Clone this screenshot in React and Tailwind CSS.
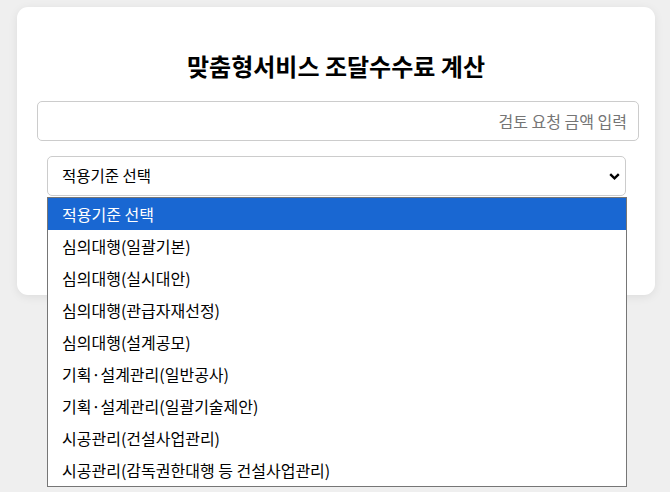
import React from "react";

const options = [
  "적용기준 선택",
  "심의대행(일괄기본)",
  "심의대행(실시대안)",
  "심의대행(관급자재선정)",
  "심의대행(설계공모)",
  "기획·설계관리(일반공사)",
  "기획·설계관리(일괄기술제안)",
  "시공관리(건설사업관리)",
  "시공관리(감독권한대행 등 건설사업관리)",
];

function Chevron() {
  return (
    <svg width="11" height="7" viewBox="0 0 11 7" className="mr-[2px]">
      <path d="M1.2 1.2 L5.5 5.3 L9.8 1.2" fill="none" stroke="#000" strokeWidth="2.4" />
    </svg>
  );
}

export default function App() {
  const selected = 0;

  return (
    <div
      className="min-h-[492px] bg-[#efefef] pt-[7px] pl-[17px]"
      style={{ fontFamily: '"Noto Sans CJK KR", "Noto Sans", sans-serif' }}
    >
      <div className="w-[638px] h-[288px] rounded-[11px] bg-white shadow-[0_2px_10px_rgba(0,0,0,0.08)] pt-[43px]">
        <h1 className="text-center text-[24px] leading-[32px] font-bold text-black">
          맞춤형서비스 조달수수료 계산
        </h1>

        <div className="mt-[19px] ml-[20px] w-[602px] h-[40px] rounded-[5px] border border-[#cccccc] flex items-center justify-end pr-[11px]">
          <span className="text-[16px] text-[#757575]">검토 요청 금액 입력</span>
        </div>

        <div className="relative mt-[15px] ml-[30px] w-[579px]">
          <div className="h-[40px] rounded-[5px] border border-[#cccccc] flex items-center justify-between pl-[14px] pr-[3px] bg-white">
            <span className="text-[15.5px] text-black">적용기준 선택</span>
            <Chevron />
          </div>

          <ul className="absolute left-0 top-[41px] w-[580px] border border-[#767676] bg-white z-10">
            {options.map((opt, i) => (
              <li
                key={opt}
                className={`h-[32px] flex items-center pl-[14px] text-[16px] ${
                  i === selected ? "bg-[#1967d2] text-white" : "text-black"
                }`}
              >
                {opt}
              </li>
            ))}
          </ul>
        </div>
      </div>
    </div>
  );
}
